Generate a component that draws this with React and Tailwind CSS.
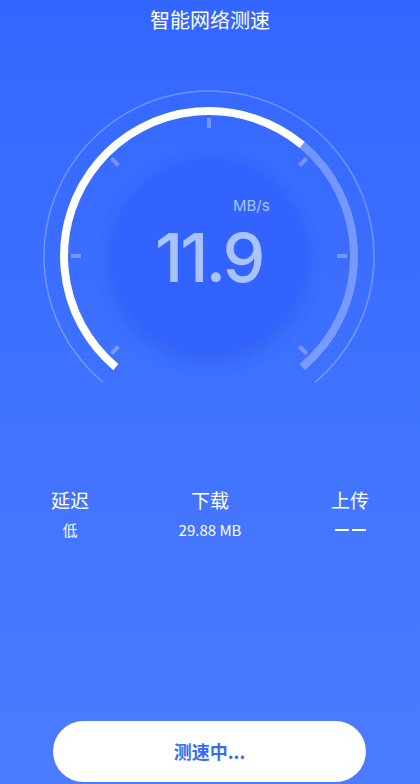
const CX = 209;
const CY = 170;

const pt = (r, deg) => {
  const a = (deg * Math.PI) / 180;
  return [CX + r * Math.sin(a), CY - r * Math.cos(a)];
};

const arc = (r, from, to) => {
  const [x1, y1] = pt(r, from);
  const [x2, y2] = pt(r, to);
  const large = to - from > 180 ? 1 : 0;
  return `M ${x1} ${y1} A ${r} ${r} 0 ${large} 1 ${x2} ${y2}`;
};

const ticks = [-135, -90, -45, 0, 45, 90, 135];

const Gauge = () => (
  <div className="relative h-[340px] w-full">
    <svg width="420" height="340" viewBox="0 0 420 340" className="block">
      <defs>
        <filter id="sh" x="-30%" y="-30%" width="160%" height="160%">
          <feDropShadow dx="0" dy="6" stdDeviation="9" floodColor="#1a45c8" floodOpacity="0.35" />
        </filter>
      </defs>
      <path d={arc(165, -140, 140)} fill="none" stroke="#ffffff" strokeOpacity="0.28" strokeWidth="1.5" />
      <path d={arc(145, 40, 140)} fill="none" stroke="#ffffff" strokeOpacity="0.3" strokeWidth="8" />
      <path d={arc(145, -140, 40)} fill="none" stroke="#ffffff" strokeWidth="8" />
      {ticks.map((t) => {
        const [x1, y1] = pt(128, t);
        const [x2, y2] = pt(138, t);
        return <line key={t} x1={x1} y1={y1} x2={x2} y2={y2} stroke="#ffffff" strokeOpacity="0.3" strokeWidth="4" />;
      })}
      <circle cx={CX} cy={CY + 0.5} r="98" fill="#3264ff" filter="url(#sh)" />
    </svg>
    <div className="absolute left-[233px] top-[112px] text-[15px] leading-none text-[#a9c3ff]" style={{ fontFamily: 'Inter, "Noto Sans", sans-serif' }}>
      MB/s
    </div>
    <div className="absolute left-[155px] top-[137px] text-[68px] font-medium leading-none tracking-[-3px] text-[#a9c3ff]" style={{ fontFamily: 'Inter, "Noto Sans", sans-serif' }}>
      11.9
    </div>
  </div>
);

const Stat = ({ label, value }) => (
  <div className="flex flex-col items-center">
    <div className="text-[19px] leading-[26px] text-white">{label}</div>
    <div className="mt-[6px] text-[15px] leading-[22px] text-white">{value}</div>
  </div>
);

export default function App() {
  return (
    <div
      className="flex h-[784px] w-[420px] flex-col overflow-hidden bg-gradient-to-b from-[#3366ff] to-[#4b7cff]"
      style={{ fontFamily: '"Noto Sans CJK SC", "Noto Sans", sans-serif' }}
    >
      <header className="flex h-[40px] items-center justify-center text-[20px] text-white">智能网络测速</header>

      <div className="mt-[46px]">
        <Gauge />
      </div>

      <div className="mt-[61px] grid grid-cols-3">
        <Stat label="延迟" value="低" />
        <Stat label="下载" value="29.88 MB" />
        <Stat
          label="上传"
          value={
            <span className="flex gap-[3px] py-[10px]">
              <span className="block h-[2px] w-[14px] bg-white" />
              <span className="block h-[2px] w-[14px] bg-white" />
            </span>
          }
        />
      </div>

      <div className="flex-1" />

      <button className="mb-[2px] ml-[53px] flex h-[61px] w-[313px] items-center justify-center rounded-full bg-white text-[18px] font-bold text-[#3a6cf2]">
        测速中...
      </button>
    </div>
  );
}
